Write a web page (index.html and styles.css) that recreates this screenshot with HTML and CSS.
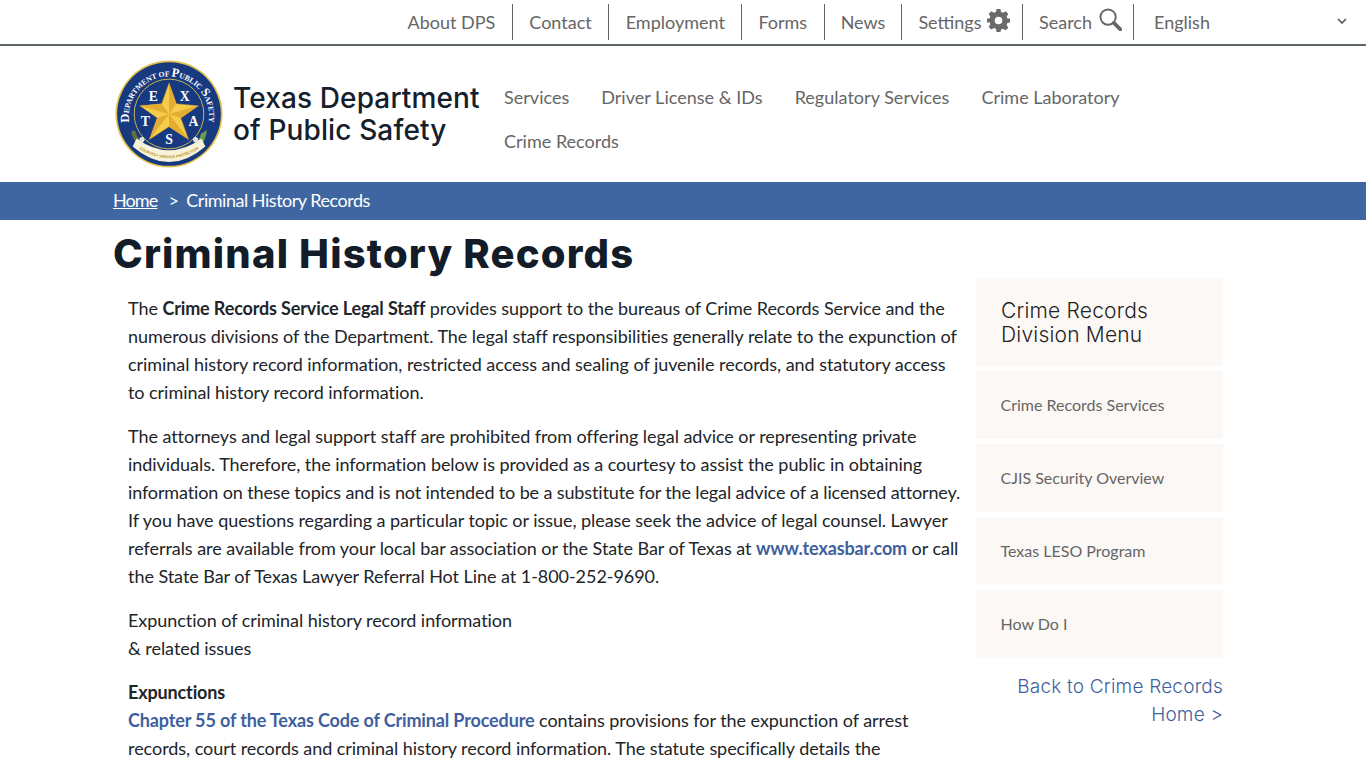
FILE: index.html
```html
<!DOCTYPE html>
<html lang="en">
<head>
<meta charset="utf-8">
<title>Criminal History Records</title>
<link rel="stylesheet" href="styles.css">
</head>
<body>
<div class="page">
<nav class="topbar">
  <a class="top-item" href="#">About DPS</a>
  <a class="top-item" href="#">Contact</a>
  <a class="top-item" href="#">Employment</a>
  <a class="top-item forms" href="#">Forms</a>
  <a class="top-item news" href="#">News</a>
  <a class="top-item settings" href="#">Settings
    <svg class="gear" viewBox="0 0 24 24"><path fill="#6a6a6a" fill-rule="evenodd" d="M10 0h4l.7 3.200 2 .8L19.500 2.300l2.800 2.800L20.500 7.900l.8 2L24 10v4l-2.700.7-.8 2 1.800 2.800-2.800 2.800-2.800-1.800-2 .8L14 24h-4l-.7-3.500-2-.8-2.800 1.800-2.800-2.800 1.800-2.800-.8-2L0 14v-4l2.700-.1.8-2L1.700 5.100l2.800-2.800L7.300 4l2-.8zM12 8a4 4 0 1 0 0 8 4 4 0 0 0 0-8z"/></svg>
  </a>
  <a class="top-item search" href="#">Search
    <svg class="mag" viewBox="0 0 24 24"><circle cx="9.500" cy="9.500" r="8" fill="none" stroke="#666" stroke-width="2"/><path d="M15.500 15.500l6.800 6.800" stroke="#666" stroke-width="3.800" stroke-linecap="round"/></svg>
  </a>
  <div class="lang">
    <span>English</span>
    <svg class="chev" viewBox="0 0 10 6"><path d="M1 1l4 4 4-4" fill="none" stroke="#555" stroke-width="1.600"/></svg>
  </div>
</nav>
<header class="masthead">
  <a class="brand" href="#">
    <svg class="seal" viewBox="0 0 110 110">
      <defs>
        <path id="arc" d="M15.300 68A41 41 0 1 1 94.700 68"/>
        <path id="arc2" d="M18 86Q55 114 92 86"/>
      </defs>
      <circle cx="55" cy="55" r="54.500" fill="#e3c04e"/>
      <circle cx="55" cy="55" r="52.800" fill="#17397f"/>
      <circle cx="55" cy="55" r="35.500" fill="none" stroke="#e3c04e" stroke-width=".9"/>
      <text class="seal-ring"><textPath href="#arc" startOffset="50%" text-anchor="middle"><tspan class="seal-big">D</tspan>EPARTMENT OF <tspan class="seal-big">P</tspan>UBLIC <tspan class="seal-big">S</tspan>AFETY</textPath></text>
      <path d="M17 73c2-3 5 0 5 3s3 3 3 6-4 3-5 0-4-6-3-9z" fill="#66703c"/>
      <path d="M93 71c-2 3-6 3-6 6s-3 3-2 6 5 2 6-1 3-8 2-11z" fill="#6f9a52"/>
      <circle cx="27.500" cy="81" r="2.600" fill="#dfe3e6"/>
      <circle cx="82" cy="81" r="2.600" fill="#dfe3e6"/>
      <path d="M18 88Q55 120 92 88L88 80Q55 104 22 80Z" fill="#f8f2d8"/>
      <text class="seal-motto"><textPath href="#arc2" startOffset="50%" text-anchor="middle">COURTESY SERVICE PROTECTION</textPath></text>
      <path d="M55 23.300L62.500 44.500 85 46.700 67 59 75 81 55 68 35 81 43 59 25.300 46.700 47.500 44.500Z" fill="#f6cd4a" stroke="#b08a2c" stroke-width=".5"/>
      <path d="M55 23.300L62.500 44.500 55 55ZM85 46.700L67 59 55 55ZM75 81L55 68 55 55ZM35 81L43 59 55 55ZM25.300 46.700L47.500 44.500 55 55Z" fill="#e3ad33"/>
      <text class="seal-letter" x="39" y="42">E</text>
      <text class="seal-letter" x="71" y="42">X</text>
      <text class="seal-letter" x="31" y="67">T</text>
      <text class="seal-letter" x="80" y="67">A</text>
      <text class="seal-letter" x="55" y="86">S</text>
    </svg>
    <span class="brand-name">Texas Department<br>of Public Safety</span>
  </a>
  <nav class="mainnav">
    <a href="#">Services</a>
    <a href="#">Driver License &amp; IDs</a>
    <a href="#">Regulatory Services</a>
    <a href="#">Crime Laboratory</a>
    <a href="#">Crime Records</a>
  </nav>
</header>
<div class="crumbs">
  <div class="wrap crumbs-in"><a href="#">Home</a><span class="sep">&gt;</span><span>Criminal History Records</span></div>
</div>
<main class="wrap">
  <h1>Criminal History Records</h1>
  <div class="columns">
    <article class="content">
      <p>The <strong>Crime Records Service Legal Staff</strong> provides support to the bureaus of Crime Records Service and the<br>numerous divisions of the Department. The legal staff responsibilities generally relate to the expunction of<br>criminal history record information, restricted access and sealing of juvenile records, and statutory access<br>to criminal history record information.</p>
      <p>The attorneys and legal support staff are prohibited from offering legal advice or representing private<br>individuals. Therefore, the information below is provided as a courtesy to assist the public in obtaining<br><span class="tight">information on these topics and is not intended to be a substitute for the legal advice of a licensed attorney.</span><br>If you have questions regarding a particular topic or issue, please seek the advice of legal counsel. Lawyer<br>referrals are available from your local bar association or the State Bar of Texas at <a href="#">www.texasbar.com</a> or call<br>the State Bar of Texas Lawyer Referral Hot Line at 1-800-252-9690.</p>
      <p>Expunction of criminal history record information<br>&amp; related issues</p>
      <p><strong>Expunctions</strong><br><a href="#">Chapter 55 of the Texas Code of Criminal Procedure</a> contains provisions for the expunction of arrest<br>records, court records and criminal history record information. The statute specifically details the</p>
    </article>
    <aside class="side">
      <h2 class="side-head">Crime Records Division Menu</h2>
      <a class="side-link" href="#">Crime Records Services</a>
      <a class="side-link" href="#">CJIS Security Overview</a>
      <a class="side-link" href="#">Texas LESO Program</a>
      <a class="side-link" href="#">How Do I</a>
      <a class="side-back" href="#">Back to Crime Records Home &gt;</a>
    </aside>
  </div>
</main>
</div>
</body>
</html>
```
FILE: styles.css
```css
* { box-sizing: border-box; }
html, body { margin: 0; height: 768px; overflow: hidden; background: #fff; }
body { font-family: Lato, "Liberation Sans", sans-serif; color: #212529; }
a { text-decoration: none; }
.page { width: 1366px; height: 768px; overflow: hidden; }

.topbar { height: 46px; border-bottom: 2px solid #5f6668; display: flex; justify-content: flex-end; align-items: flex-start; padding-top: 4px; font-size: 18px; }
.top-item { height: 36px; display: flex; align-items: center; gap: 5px; padding: 0 16.500px 1px; color: #666; border-right: 1px solid #5f6668; }
.forms { padding: 0 17px 1px 16px; }
.news { padding: 0 15.500px 1px 15.500px; }
.settings { padding-right: 12px; }
.search { padding-right: 11px; gap: 7px; }
.gear { width: 23px; height: 23px; margin-top: -2px; }
.mag { width: 23px; height: 23px; margin-top: -4px; }
.lang { width: 232px; height: 36px; padding: 0 19px 1px 20px; display: flex; align-items: center; justify-content: space-between; color: #666; }
.chev { width: 10px; height: 6px; margin-top: -1px; }

.masthead { height: 136px; padding-left: 115px; display: flex; }
.brand { display: flex; align-items: flex-start; padding-top: 14px; width: 374px; flex: none; }
.seal { width: 108px; height: 108px; flex: none; }
.seal-ring { font: 700 7.800px "Liberation Serif", serif; fill: #fff; }
.seal-big { font-size: 12.500px; }
.seal-motto { font: 700 3.800px "Liberation Sans", sans-serif; fill: #b98f24; }
.seal-letter { font: 700 14px "Liberation Serif", serif; fill: #fff; text-anchor: middle; }
.brand-name { margin: 22px 0 0 10px; font: 500 28px/32px Inter, sans-serif; letter-spacing: .13px; color: #14202c; white-space: nowrap; }
.mainnav { padding: 29px 0 0 15px; width: 670px; display: flex; flex-wrap: wrap; gap: 0 32px; font-size: 18px; letter-spacing: .02px; line-height: 44px; align-content: flex-start; }
.mainnav a { color: #666; }

.wrap { width: 1140px; margin: 0 auto; }
.crumbs { height: 38px; background: #3f66a0; color: #fff; font-size: 18px; line-height: 37px; letter-spacing: -.48px; }
.crumbs-in { display: flex; }
.crumbs a { color: #fff; text-decoration: underline; letter-spacing: -.9px; }
.sep { margin: 0 8px 0 11px; }

h1 { margin: 10px 0 0; font: 800 40px/48px Inter, sans-serif; color: #131c29; letter-spacing: 1.18px; white-space: nowrap; }
.columns { display: flex; }
.content { width: 863px; padding: 16px 0 0 15px; flex: none; font-size: 18px; line-height: 28px; letter-spacing: -.05px; color: #212529; white-space: nowrap; }
.content p { margin: 0 0 16px; }
.content .tight { letter-spacing: -.13px; }
.content strong { font-weight: 700; letter-spacing: -.14px; }
.content a { color: #3f5f9e; font-weight: 700; letter-spacing: -.14px; }
.side { width: 247px; flex: none; }
.side-head { margin: 0 0 5px; height: 88px; padding: 21px 25px 0; background: #fcf8f5; font: 300 21px/24px Inter, sans-serif; letter-spacing: .2px; color: #222; }
.side-link { display: flex; align-items: center; height: 68px; margin-bottom: 5px; padding: 0 25px 2px 24.500px; background: #fcf8f5; color: #666; font-size: 16px; }
.side-back { display: block; margin-top: 15px; text-align: right; font: 300 19px/28px Inter, sans-serif; letter-spacing: .2px; color: #3f5f9e; }
```
